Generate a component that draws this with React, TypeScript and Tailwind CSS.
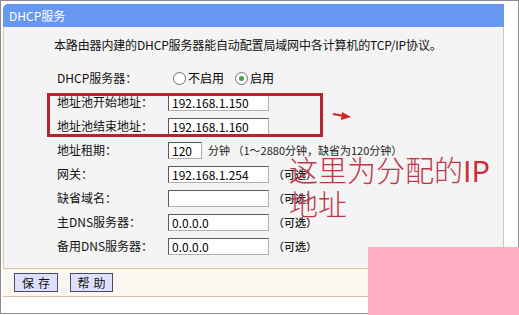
import React from "react";

const font = { fontFamily: '"Noto Sans CJK SC", "Liberation Sans", sans-serif' };

function Radio({ checked }: { checked?: boolean }) {
  return (
    <span className="relative inline-flex w-[13px] h-[13px] rounded-full border border-[#6f6f6f] bg-white items-center justify-center">
      {checked && <span className="w-[5px] h-[5px] rounded-full bg-[#3fa64a]" />}
    </span>
  );
}

function Field({ value, w = "w-[101px]" }: { value?: string; w?: string }) {
  return (
    <div
      className={`${w} h-[17px] bg-white border border-[#5a5a5a] border-r-[#b0b0b0] border-b-[#b0b0b0] pl-[3px] text-[12px] leading-[15px] text-black`}
    >
      {value}
    </div>
  );
}

function Row({ label, children }: { label: string; children: React.ReactNode }) {
  return (
    <div className="flex items-center h-[24px]">
      <div className="w-[111px] text-[12px] text-[#111]">{label}</div>
      <div className="flex items-center">{children}</div>
    </div>
  );
}

const Optional = () => (
  <span className="ml-[4px] text-[11px] text-[#1a1a1a] font-medium">（可选）</span>
);

export default function App() {
  return (
    <div
      style={font}
      className="relative w-[519px] h-[315px] bg-white overflow-hidden"
    >
      <div className="h-[314px] border border-[#8c8c8c] pt-[3px] pl-[2px]">
        <div className="w-[501px]">
          <div className="h-[23px] bg-[#6797f0] rounded-tl-[5px] pl-[6px] text-[12px] leading-[23px] text-white">
            DHCP服务
          </div>
          <div className="h-[241px] bg-[#f4f4f4] border-l border-r border-[#d8c8a6] pt-[10px] pl-[50px]">
            <div className="text-[12px] leading-[16px] text-[#111] tracking-[-0.15px]">
              本路由器内建的DHCP服务器能自动配置局域网中各计算机的TCP/IP协议。
            </div>
            <div className="mt-[13px] pl-[3px]">
              <Row label="DHCP服务器：">
                <span className="ml-[5px] flex items-center gap-[2px] text-[12px]">
                  <Radio />
                  不启用
                </span>
                <span className="ml-[11px] flex items-center gap-[2px] text-[12px]">
                  <Radio checked />
                  启用
                </span>
              </Row>
              <Row label="地址池开始地址：">
                <Field value="192.168.1.150" />
              </Row>
              <Row label="地址池结束地址：">
                <Field value="192.168.1.160" />
              </Row>
              <Row label="地址租期：">
                <Field value="120" w="w-[34px]" />
                <span className="ml-[6px] text-[11px] text-[#1a1a1a]">
                  分钟 （1～2880分钟，缺省为120分钟）
                </span>
              </Row>
              <Row label="网关：">
                <Field value="192.168.1.254" />
                <Optional />
              </Row>
              <Row label="缺省域名：">
                <Field />
                <Optional />
              </Row>
              <Row label="主DNS服务器：">
                <Field value="0.0.0.0" />
                <Optional />
              </Row>
              <Row label="备用DNS服务器：">
                <Field value="0.0.0.0" />
                <Optional />
              </Row>
            </div>
          </div>
          <div className="h-[29px] bg-[#fbf7f1] border-t border-b border-[#d6c2a0] flex items-center gap-[12px] pl-[11px]">
            <button className="w-[44px] h-[19px] bg-[#dfe0fb] border border-[#4a4a66] text-[12px] leading-[17px] tracking-[4px] pl-[4px] text-[#111]">
              保存
            </button>
            <button className="w-[43px] h-[19px] bg-[#dfe0fb] border border-[#4a4a66] text-[12px] leading-[17px] tracking-[4px] pl-[4px] text-[#111]">
              帮助
            </button>
          </div>
        </div>
      </div>

      {/* annotation overlay */}
      <div className="absolute left-[47px] top-[93px] w-[276px] h-[44px] border-[3px] border-[#b3262c]" />
      <svg className="absolute left-[332px] top-[111px]" width="20" height="11" viewBox="0 0 20 11">
        <path d="M1 3 L12 5" stroke="#d0222a" strokeWidth="2" fill="none" />
        <path d="M10 1 L19 6 L9 9 Z" fill="#d0222a" />
      </svg>
      <div className="absolute left-[289px] top-[152px] text-[29px] leading-[34px] font-light text-[#c0364a]">
        这里为分配的<span className="font-normal text-[#d02a36]">IP</span>
        <br />
        地址
      </div>
      <div className="absolute left-[368px] top-[247px] w-[151px] h-[68px] bg-[#feadc2]" />
    </div>
  );
}
